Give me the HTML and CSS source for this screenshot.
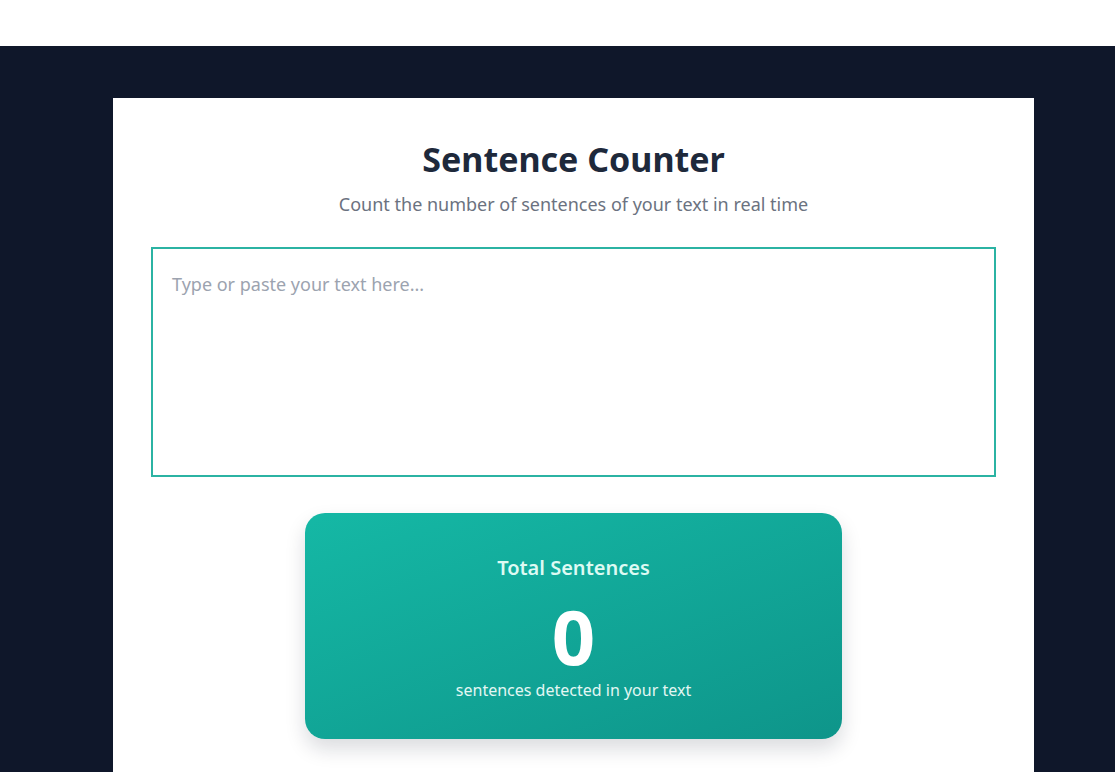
FILE: index.html
```html
<!DOCTYPE html>
<html>
<head>
<meta charset="utf-8">
<link rel="stylesheet" href="styles.css">
</head>
<body>
<header class="topbar"></header>
<main class="stage">
  <section class="card">
    <h1 class="title">Sentence Counter</h1>
    <p class="subtitle">Count the number of sentences of your text in real time</p>
    <textarea class="input" placeholder="Type or paste your text here..."></textarea>
    <div class="stat">
      <div class="stat-label">Total Sentences</div>
      <div class="stat-value">0</div>
      <div class="stat-note">sentences detected in your text</div>
    </div>
  </section>
</main>
</body>
</html>
```
FILE: styles.css
```css
html, body {
  margin: 0;
  padding: 0;
  height: 100%;
  overflow: hidden;
}
body {
  font-family: "Noto Sans", "Open Sans", sans-serif;
  background: #0f172a;
}
.topbar {
  height: 46px;
  background: #ffffff;
}
.stage {
  background: #0f172a;
  padding: 52px 81px 0 113px;
}
.card {
  background: #ffffff;
  width: 921px;
  box-sizing: border-box;
  padding: 39px 38px 40px;
  min-height: 700px;
  display: flex;
  flex-direction: column;
  align-items: center;
}
.title {
  margin: 0;
  font-size: 34px;
  font-weight: 700;
  color: #1e293b;
  line-height: 1.3;
}
.subtitle {
  margin: 11px 0 0;
  font-size: 18px;
  color: #6b7280;
  line-height: 1.4;
}
.input {
  margin-top: 30px;
  width: 100%;
  height: 230px;
  box-sizing: border-box;
  border: 2px solid #2bb3a3;
  padding: 23px 19px;
  font-family: inherit;
  font-size: 18px;
  resize: none;
  outline: none;
  display: block;
}
.input::placeholder {
  color: #9ca3af;
}
.stat {
  margin-top: 36px;
  width: 537px;
  height: 226px;
  box-sizing: border-box;
  border-radius: 20px;
  background: linear-gradient(160deg, #15b8a5 0%, #0e958a 100%);
  box-shadow: 0 10px 20px rgba(15, 23, 42, 0.15);
  display: flex;
  flex-direction: column;
  align-items: center;
  padding-top: 42px;
  color: #ffffff;
}
.stat-label {
  font-size: 20px;
  font-weight: 600;
  color: #ddfaf3;
  line-height: 1.3;
}
.stat-value {
  font-size: 76px;
  font-weight: 700;
  line-height: 1;
  margin-top: 17px;
}
.stat-note {
  font-size: 16px;
  color: #e3f7f3;
  margin-top: 5px;
}
```
